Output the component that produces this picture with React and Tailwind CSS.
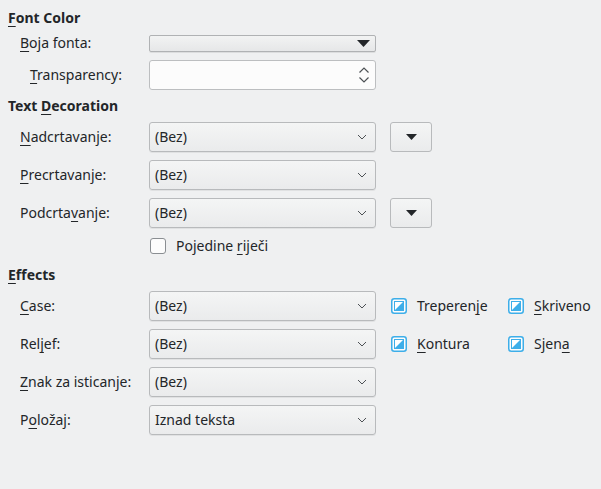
import React from "react";

const U = ({ children }) => (
  <span className="underline decoration-1 underline-offset-[3px]">{children}</span>
);

const Chevron = () => (
  <svg width="10" height="6" viewBox="0 0 10 6" className="shrink-0">
    <path d="M1 1 L5 5 L9 1" fill="none" stroke="#4d5155" strokeWidth="1" />
  </svg>
);

const Triangle = ({ w = 13, h = 7 }) => (
  <svg width={w} height={h} viewBox={`0 0 ${w} ${h}`}>
    <path d={`M0 0 H${w} L${w / 2} ${h} Z`} fill="#232629" />
  </svg>
);

const Combo = ({ value }) => (
  <div className="w-[227px] h-[30px] flex items-center justify-between pl-[5px] pr-[8px] border border-[#b8babc] rounded-[3px] bg-gradient-to-b from-[#f4f5f5] to-[#eaebec] shadow-[0_1px_0_rgba(0,0,0,0.06)]">
    <span>{value}</span>
    <Chevron />
  </div>
);

const SmallButton = () => (
  <div className="ml-[14px] w-[42px] h-[30px] flex items-center justify-center border border-[#b8babc] rounded-[3px] bg-gradient-to-b from-[#f4f5f5] to-[#eaebec]">
    <Triangle w={11} h={6} />
  </div>
);

const TriCheck = () => (
  <svg width="16" height="16" viewBox="0 0 16 16" className="shrink-0">
    <rect x="0.75" y="0.75" width="14.5" height="14.5" rx="2.5" fill="#fcfcfc" stroke="#3daee9" strokeWidth="1.5" />
    <rect x="3.5" y="3.5" width="9" height="9" fill="#ffffff" stroke="#3daee9" strokeWidth="1" />
    <path d="M4 12 L12 4 L12 12 Z" fill="#3daee9" />
  </svg>
);

const Row = ({ label, children, indent = "pl-[20px]" }) => (
  <div className={`flex items-center ${indent}`}>
    <div className={indent === "pl-[20px]" ? "w-[129px]" : "w-[119px]"}>{label}</div>
    {children}
  </div>
);

const Check = ({ label }) => (
  <div className="flex items-center gap-[10px]">
    <TriCheck />
    <span>{label}</span>
  </div>
);

export default function App() {
  return (
    <div
      className="w-[601px] h-[489px] bg-[#eff0f1] text-[#232629] text-[14px] leading-[18px] overflow-hidden"
      style={{ fontFamily: '"Noto Sans", "Open Sans", sans-serif' }}
    >
      <div className="pl-[8px] pt-[9px] font-bold">
        <U>F</U>ont Color
      </div>
      <div className="flex flex-col gap-[8px] mt-[7px]">
        <Row label={<><U>B</U>oja fonta:</>}>
          <div className="w-[227px] h-[17px] flex items-center justify-end pr-[5px] border border-[#b0b2b4] rounded-[2px] bg-gradient-to-b from-[#f2f3f3] to-[#e6e7e8] shadow-[0_1px_0_rgba(0,0,0,0.08)]">
            <Triangle />
          </div>
        </Row>
        <Row indent="pl-[30px]" label={<><U>T</U>ransparency:</>}>
          <div className="w-[227px] h-[30px] flex items-center justify-end pr-[5px] border border-[#bcbec0] rounded-[3px] bg-[#fcfcfc]">
            <svg width="12" height="18" viewBox="0 0 12 18">
              <path d="M1.5 6.5 L6 2 L10.5 6.5" fill="none" stroke="#4d5155" strokeWidth="1.2" />
              <path d="M1.5 11.5 L6 16 L10.5 11.5" fill="none" stroke="#4d5155" strokeWidth="1.2" />
            </svg>
          </div>
        </Row>
      </div>

      <div className="pl-[8px] mt-[7px] font-bold">
        Text <U>D</U>ecoration
      </div>
      <div className="flex flex-col gap-[8px] mt-[7px]">
        <Row label={<><U>N</U>adcrtavanje:</>}>
          <Combo value="(Bez)" />
          <SmallButton />
        </Row>
        <Row label={<><U>P</U>recrtavanje:</>}>
          <Combo value="(Bez)" />
        </Row>
        <Row label={<>Podcrta<U>v</U>anje:</>}>
          <Combo value="(Bez)" />
          <SmallButton />
        </Row>
        <div className="flex items-center h-[20px] pl-[150px] gap-[10px]">
          <div className="w-[16px] h-[16px] border border-[#8a8e92] rounded-[3px] bg-[#fcfcfc]" />
          <span>
            Pojedine <U>r</U>iječi
          </span>
        </div>
      </div>

      <div className="pl-[8px] mt-[10px] font-bold">
        <U>E</U>ffects
      </div>
      <div className="flex flex-col gap-[8px] mt-[7px]">
        <Row label={<><U>C</U>ase:</>}>
          <Combo value="(Bez)" />
          <div className="ml-[15px] w-[117px]">
            <Check label={<>Treperen<U>j</U>e</>} />
          </div>
          <Check label={<><U>S</U>kriveno</>} />
        </Row>
        <Row label={<>Rel<U>j</U>ef:</>}>
          <Combo value="(Bez)" />
          <div className="ml-[15px] w-[117px]">
            <Check label={<><U>K</U>ontura</>} />
          </div>
          <Check label={<>Sjen<U>a</U></>} />
        </Row>
        <Row label={<><U>Z</U>nak za isticanje:</>}>
          <Combo value="(Bez)" />
        </Row>
        <Row label={<>P<U>o</U>ložaj:</>}>
          <Combo value="Iznad teksta" />
        </Row>
      </div>
    </div>
  );
}
